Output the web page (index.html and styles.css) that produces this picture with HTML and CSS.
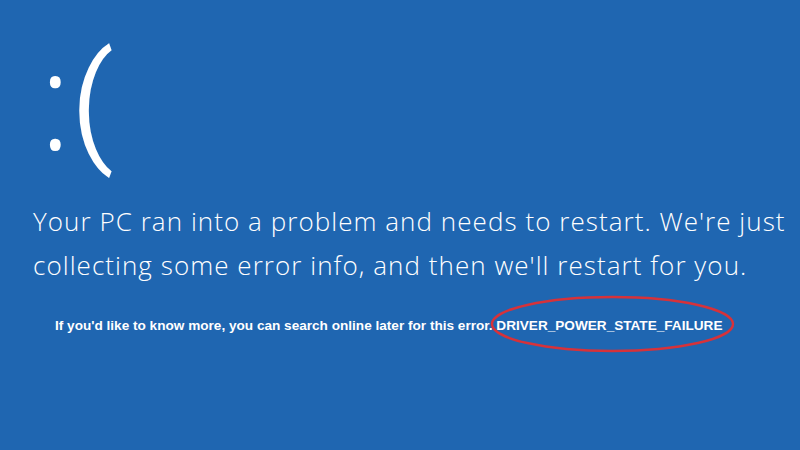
FILE: index.html
```html
<!DOCTYPE html>
<html>
<head>
<meta charset="utf-8">
<link rel="stylesheet" href="styles.css">
</head>
<body>
<main class="screen">
  <div class="face"><span class="colon">:</span><span class="paren">(</span></div>
  <p class="message">Your PC ran into a problem and needs to restart. We're just collecting some error info, and then we'll restart for you.</p>
  <p class="details">If you'd like to know more, you can search online later for this error. <span class="code">DRIVER_POWER_STATE_FAILURE<svg class="ring" viewBox="0 0 250 58" preserveAspectRatio="none"><ellipse cx="125" cy="29" rx="123" ry="27" fill="none" stroke="#d6323a" stroke-width="2.5"/></svg></span></p>
</main>
</body>
</html>
```
FILE: styles.css
```css
html, body {
  margin: 0;
  padding: 0;
  background: #1f66b1;
}
.screen {
  width: 800px;
  height: 450px;
  box-sizing: border-box;
  padding: 6px 0 0 33px;
  color: #fff;
  font-family: "Open Sans", sans-serif;
  overflow: hidden;
}
.face {
  height: 184px;
  line-height: 184px;
  white-space: nowrap;
}
.colon {
  font-size: 136px;
  font-weight: 300;
  margin-left: 6px;
  vertical-align: 2px;
}
.paren {
  font-family: Roboto, "Open Sans", sans-serif;
  font-size: 128px;
  font-weight: 300;
  -webkit-text-stroke: 2px #fff;
  margin-left: 0;
  vertical-align: 5px;
}
.message {
  margin: 9px 0 0 0;
  font-size: 26px;
  font-weight: 300;
  letter-spacing: 1.05px;
  line-height: 44px;
  width: 780px;
}
.details {
  margin: 31px 0 0 22px;
  font-family: "Liberation Sans", Arial, sans-serif;
  font-weight: bold;
  font-size: 13.6px;
}
.code {
  position: relative;
}
.ring {
  position: absolute;
  left: -6px;
  top: -23px;
  width: 245px;
  height: 58px;
}
```
